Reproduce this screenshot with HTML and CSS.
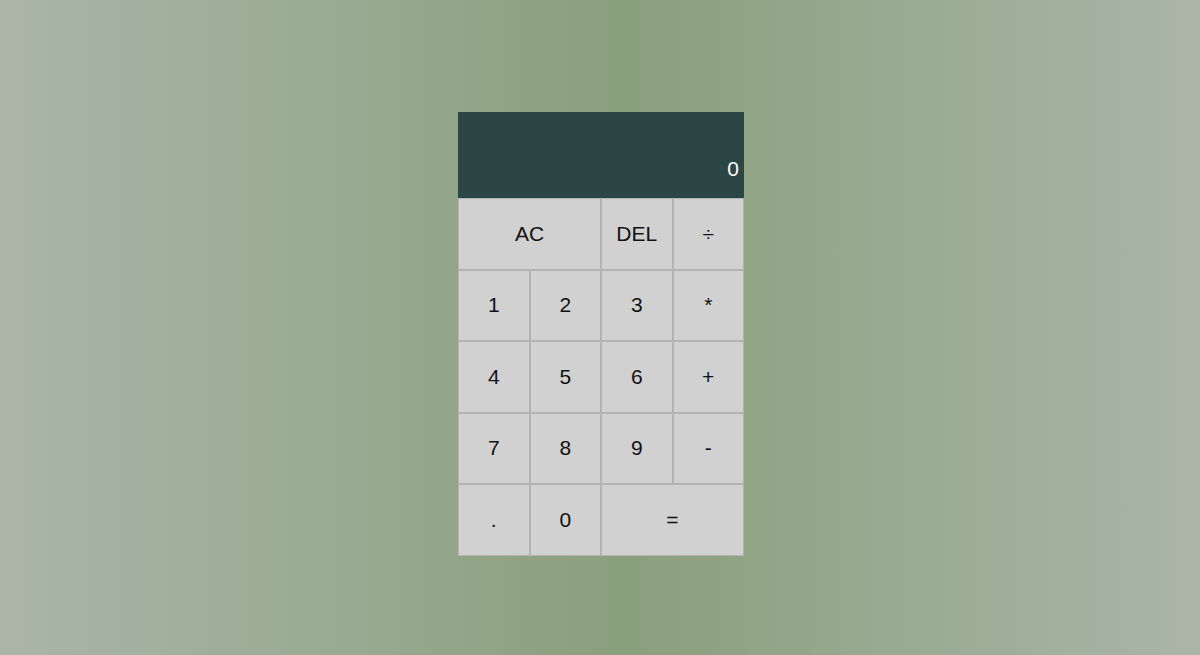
FILE: index.html
```html
<!DOCTYPE html>
<html lang="en">
<head>
<meta charset="utf-8">
<title>Calculator</title>
<link rel="stylesheet" href="styles.css">
</head>
<body>
<div class="calculator">
  <div class="output">
    <div class="previous-operand"></div>
    <div class="current-operand">0</div>
  </div>
  <button class="span-two">AC</button>
  <button>DEL</button>
  <button>÷</button>
  <button>1</button>
  <button>2</button>
  <button>3</button>
  <button>*</button>
  <button>4</button>
  <button>5</button>
  <button>6</button>
  <button>+</button>
  <button>7</button>
  <button>8</button>
  <button>9</button>
  <button>-</button>
  <button>.</button>
  <button>0</button>
  <button class="span-two">=</button>
</div>
</body>
</html>
```
FILE: styles.css
```css
* {
  box-sizing: border-box;
}

html, body {
  margin: 0;
  padding: 0;
}

body {
  min-height: 100vh;
  background: linear-gradient(to right, #aab5a8 0%, #9bac95 25%, #8a9f7c 52%, #9bac95 78%, #aab5a8 100%);
  font-family: "Liberation Sans", Arial, sans-serif;
}

.calculator {
  display: grid;
  justify-content: center;
  grid-template-columns: repeat(4, 71.5px);
  grid-template-rows: 86px repeat(5, 71.5px);
  padding-top: 112px;
  padding-left: 2px;
}

.output {
  grid-column: 1 / -1;
  background-color: #2c4545;
  display: flex;
  flex-direction: column;
  align-items: flex-end;
  justify-content: flex-end;
  padding: 5px 5px 18px 5px;
  color: #ffffff;
  word-break: break-all;
}

.previous-operand {
  font-size: 14px;
  color: rgba(255, 255, 255, 0.75);
}

.current-operand {
  font-size: 21px;
  line-height: 23px;
}

.calculator button {
  font-family: "Liberation Sans", Arial, sans-serif;
  font-size: 21px;
  color: #111111;
  background-color: #d1d1d1;
  border: 1px solid #b3b3b3;
  outline: none;
  padding: 0;
  cursor: pointer;
}

.span-two {
  grid-column: span 2;
}
```
